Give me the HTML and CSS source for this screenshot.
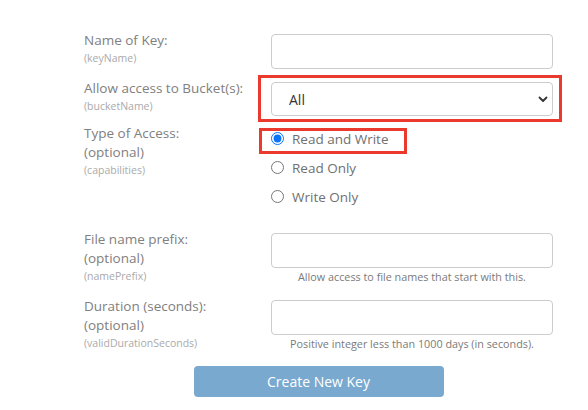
FILE: index.html
```html
<!DOCTYPE html>
<html lang="en">
  <head>
    <meta charset="UTF-8" />
    <meta name="viewport" content="width=device-width, initial-scale=1.0" />
    <title>Create Application Key</title>
    <link rel="stylesheet" href="styles.css">
  </head>
  <body>
    <form class="key-form">
      <!-- Name of key -->
      <div class="row row-name">
        <div class="label">
          <div class="title">Name of Key:</div>
          <div class="param">(keyName)</div>
        </div>
        <div class="field">
          <input class="text-input" type="text" />
        </div>
      </div>

      <!-- Bucket -->
      <div class="row row-bucket">
        <div class="label">
          <div class="title">Allow access to Bucket(s):</div>
          <div class="param">(bucketName)</div>
        </div>
        <div class="field">
          <div class="select-wrap marked">
            <select class="select-input">
              <option>All</option>
            </select>
            <svg class="chevron" width="10" height="7" viewBox="0 0 10 7">
              <path d="M1.5 1.5 L5 5 L8.5 1.5" fill="none" stroke="#333" stroke-width="1.8" stroke-linecap="round" stroke-linejoin="round" />
            </svg>
          </div>
        </div>
      </div>

      <!-- Type of access -->
      <div class="row row-access">
        <div class="label">
          <div class="title">Type of Access:</div>
          <div class="title">(optional)</div>
          <div class="param">(capabilities)</div>
        </div>
        <div class="field radios">
          <label class="radio marked">
            <input type="radio" name="access" checked />
            <span>Read and Write</span>
          </label>
          <label class="radio">
            <input type="radio" name="access" />
            <span>Read Only</span>
          </label>
          <label class="radio">
            <input type="radio" name="access" />
            <span>Write Only</span>
          </label>
        </div>
      </div>

      <!-- Prefix -->
      <div class="row row-prefix">
        <div class="label">
          <div class="title">File name prefix:</div>
          <div class="title">(optional)</div>
          <div class="param">(namePrefix)</div>
        </div>
        <div class="field">
          <input class="text-input" type="text" />
          <div class="help">Allow access to file names that start with this.</div>
        </div>
      </div>

      <!-- Duration -->
      <div class="row row-duration">
        <div class="label">
          <div class="title">Duration (seconds):</div>
          <div class="title">(optional)</div>
          <div class="param">(validDurationSeconds)</div>
        </div>
        <div class="field">
          <input class="text-input" type="text" />
          <div class="help">Positive integer less than 1000 days (in seconds).</div>
        </div>
      </div>

      <div class="actions">
        <button class="create-btn" type="button">Create New Key</button>
      </div>
    </form>
  </body>
</html>
```

FILE: styles.css
```css
body {
  margin: 0;
  background-color: #ffffff;
  font-family: "Open Sans", "Liberation Sans", sans-serif;
}

.key-form {
  width: 469px;
  margin-left: 84px;
  padding-top: 31px;
}

.row {
  display: grid;
  grid-template-columns: 187px 282px;
  align-items: start;
}

.row-name {
  margin-bottom: 10px;
}

.row-bucket {
  margin-bottom: 8px;
}

.row-access {
  margin-bottom: 19px;
}

.row-prefix {
  margin-bottom: 12px;
}

/* Label column */
.title {
  font-size: 13.5px;
  line-height: 19px;
  color: #808080;
}

.param {
  font-size: 10.5px;
  line-height: 17px;
  color: #aaaaaa;
}

/* Input column */
.field {
  padding-top: 3px;
}

.text-input {
  display: block;
  box-sizing: border-box;
  width: 282px;
  height: 35px;
  margin: 0;
  border: 1px solid #cccccc;
  border-radius: 4px;
  background-color: #ffffff;
}

.select-wrap {
  position: relative;
}

.select-input {
  display: block;
  box-sizing: border-box;
  width: 282px;
  height: 34px;
  margin: 0;
  padding: 0 0 0 17px;
  border: 1px solid #cccccc;
  border-radius: 4px;
  background-color: #ffffff;
  font-family: "Open Sans", "Liberation Sans", sans-serif;
  font-size: 14px;
  color: #333333;
  appearance: none;
  -webkit-appearance: none;
}

.chevron {
  position: absolute;
  top: 14px;
  right: 5px;
  pointer-events: none;
}

/* Red annotation frames */
.marked {
  position: relative;
}

.select-wrap.marked::after {
  content: "";
  position: absolute;
  top: -7px;
  left: -13px;
  right: -9px;
  bottom: -6px;
  border: 3px solid #ea3a2e;
  pointer-events: none;
}

.radio.marked::after {
  content: "";
  position: absolute;
  top: 4px;
  left: -12px;
  width: 148px;
  height: 26px;
  box-sizing: border-box;
  border: 3px solid #ea3a2e;
  pointer-events: none;
}

.radios {
  padding-top: 0;
  display: flex;
  flex-direction: column;
}

.radio {
  display: flex;
  align-items: center;
  height: 29px;
  font-size: 13.5px;
  color: #707070;
}

.radio input {
  width: 13px;
  height: 13px;
  margin: 0 8px 0 0;
  accent-color: #0a74f5;
}

.help {
  margin-top: 1px;
  font-size: 10.8px;
  line-height: 16px;
  color: #7a7a7a;
  text-align: center;
}

/* Submit */
.actions {
  display: flex;
  justify-content: center;
  margin-top: 14px;
}

.create-btn {
  width: 250px;
  height: 31px;
  border: none;
  border-radius: 4px;
  background-color: #79a9cf;
  color: #ffffff;
  font-family: "Open Sans", "Liberation Sans", sans-serif;
  font-size: 14px;
}
```
